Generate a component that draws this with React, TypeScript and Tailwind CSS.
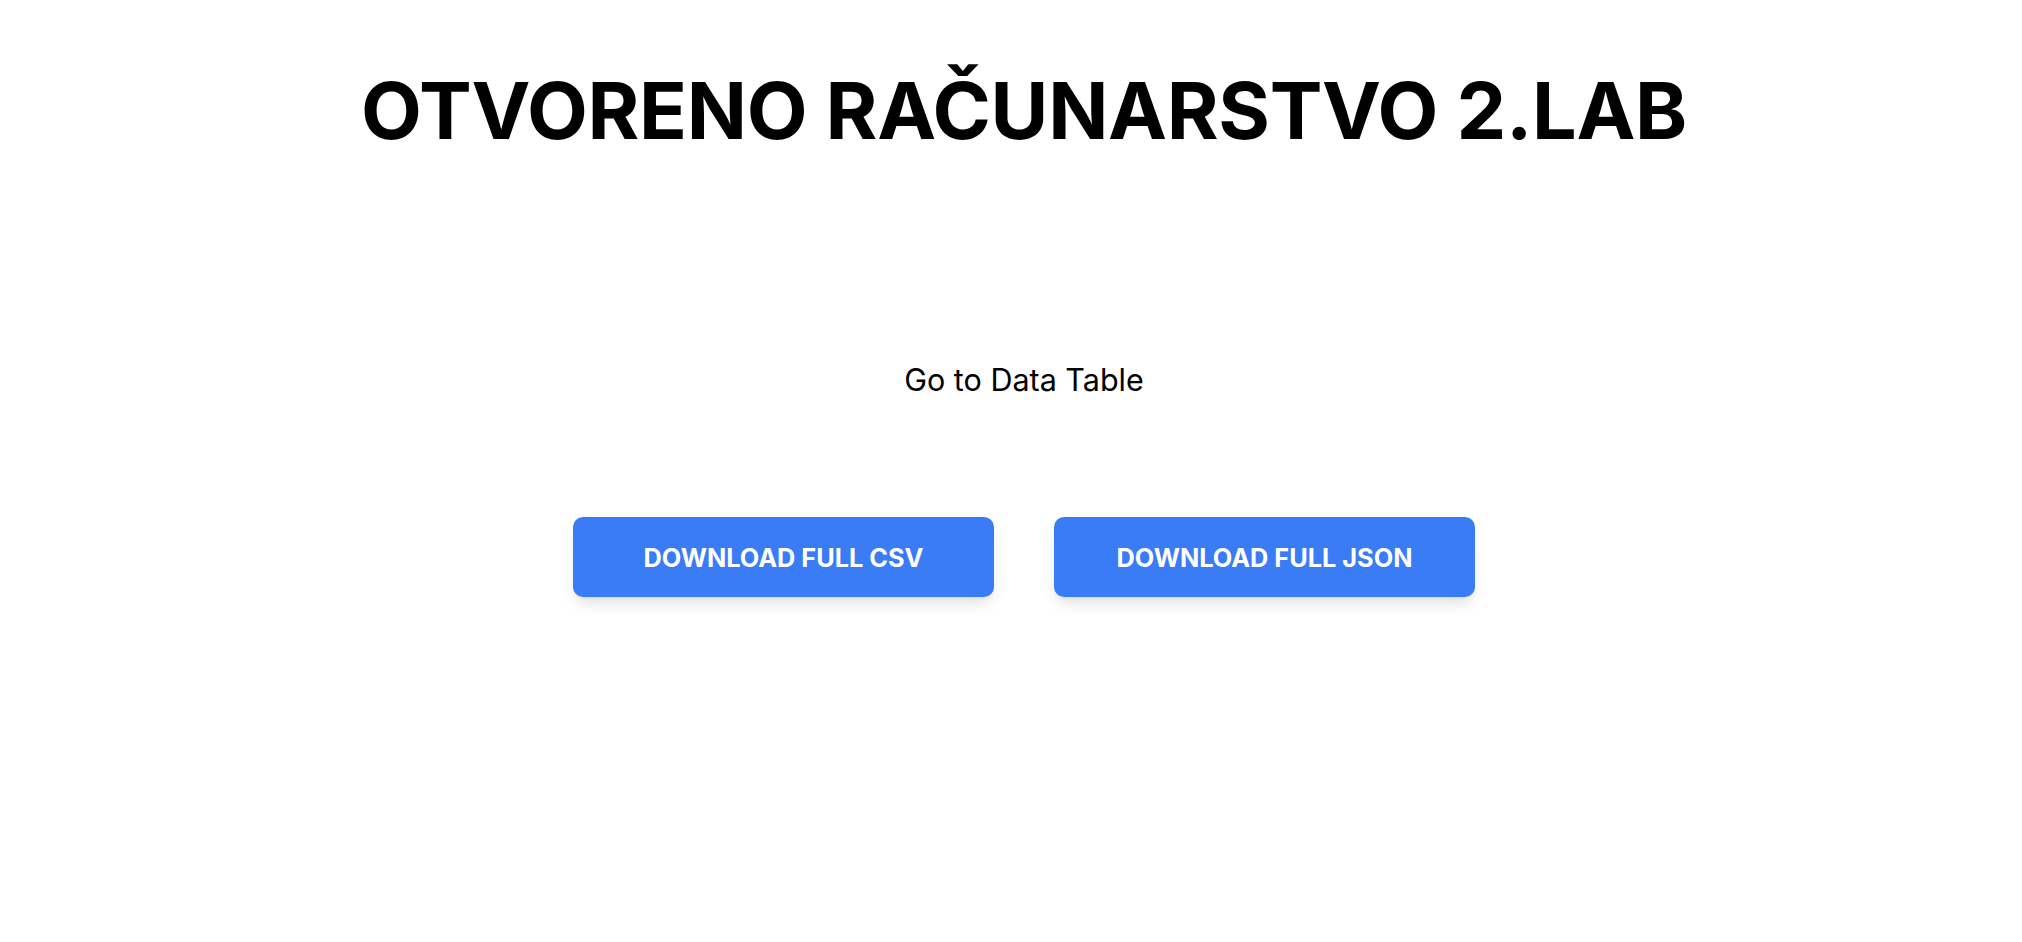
import React from 'react';

const App: React.FC = () => {
  return (
    <div className="min-h-screen w-full bg-white pl-[26px] font-['Inter',sans-serif] text-black">
      {/* Header */}
      <h1 className="pt-[71px] text-center text-[79px] font-bold leading-none tracking-[-0.004em]">
        OTVORENO RAČUNARSTVO 2.LAB
      </h1>

      {/* Link */}
      <div className="mt-[215px] flex justify-center">
        <a href="#" className="text-[30.5px] leading-none text-black">
          Go to Data Table
        </a>
      </div>

      {/* Download buttons */}
      <div className="mt-[121px] flex justify-center gap-[60px]">
        <button className="h-[80px] w-[421px] rounded-[10px] bg-[#3a7bf6] pt-[2px] text-[25.3px] font-bold text-white shadow-lg">
          DOWNLOAD FULL CSV
        </button>
        <button className="h-[80px] w-[421px] rounded-[10px] bg-[#3a7bf6] pt-[2px] text-[25.3px] font-bold text-white shadow-lg">
          DOWNLOAD FULL JSON
        </button>
      </div>
    </div>
  );
};

export default App;
